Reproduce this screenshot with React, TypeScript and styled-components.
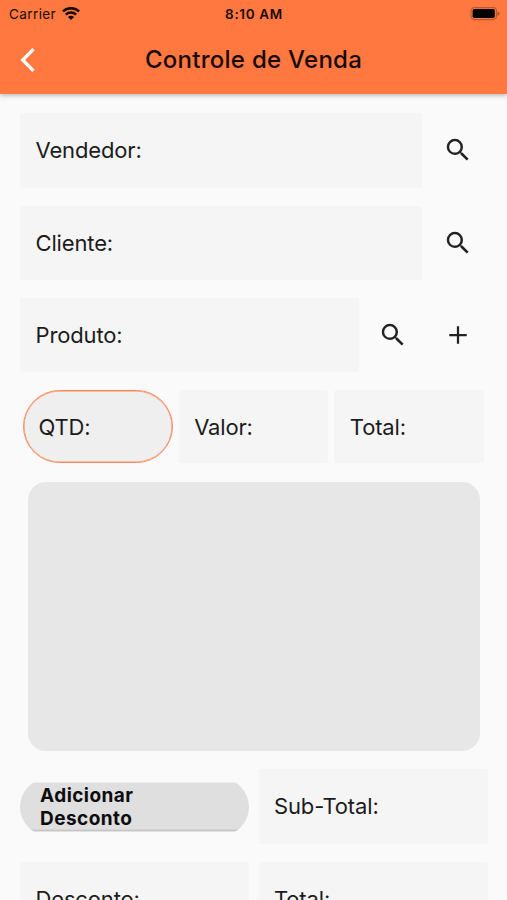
import React from "react";
import styled, { createGlobalStyle } from "styled-components";

const GlobalStyle = createGlobalStyle`
  * { box-sizing: border-box; }
  html, body { margin: 0; height: 100%; overflow: hidden; }
  body { background: #fafafa; font-family: Inter, "Liberation Sans", sans-serif; color: #1c1c1c; }
  button { border: 0; padding: 0; background: none; font: inherit; color: inherit; }
  svg { display: block; }
`;

const Screen = styled.div`
  width: 507px;
  height: 900px;
  overflow: hidden;
  background: #fafafa;
`;

const Header = styled.header`
  height: 94px;
  background: #ff7840;
  color: #170b06;
  box-shadow: 0 1px 5px rgba(0, 0, 0, 0.32);
`;

const StatusBar = styled.div`
  height: 27px;
  padding: 0 7px 0 9px;
  display: grid;
  grid-template-columns: 1fr auto 1fr;
  align-items: center;
  font-size: 13.5px;
  line-height: 27px;
`;

const Carrier = styled.div`
  display: flex;
  align-items: center;
  gap: 6px;
  letter-spacing: 0.4px;
`;

const Clock = styled.div`
  padding: 1px 1px 0 0;
  font-size: 13.5px;
  font-weight: 600;
  letter-spacing: 0.65px;
`;

const Battery = styled.div`
  justify-self: end;
`;

const TitleBar = styled.div`
  height: 65px;
  padding: 0 20px;
  display: grid;
  grid-template-columns: 40px 1fr 40px;
  align-items: center;
`;

const Title = styled.h1`
  margin: 0;
  text-align: center;
  font-size: 24px;
  line-height: 30px;
  font-weight: 500;
  letter-spacing: 0.27px;
`;

const Form = styled.main`
  padding: 19px 19px 0 20px;
  display: flex;
  flex-direction: column;
`;

const Row = styled.div<{ $columns: string; $gap?: number }>`
  display: grid;
  grid-template-columns: ${(p) => p.$columns};
  column-gap: ${(p) => p.$gap ?? 0}px;
  align-items: center;
  margin-bottom: 18px;
`;

const AmountRow = styled(Row)`
  padding: 0 4px 0 3px;
  margin-bottom: 19px;
`;

const Field = styled.div<{ $height?: number; $inset?: number }>`
  height: ${(p) => p.$height ?? 74}px;
  padding: 0 0 1px ${(p) => p.$inset ?? 15.5}px;
  display: flex;
  align-items: center;
  background: #f5f5f5;
  border-radius: 2px;
  font-size: 22px;
  line-height: 28px;
  letter-spacing: -0.15px;
  white-space: nowrap;
`;

const AmountField = styled(Field)`
  padding-bottom: 0;
`;

const FocusedField = styled(AmountField)`
  background: #efefef;
  border: 1px solid #f98a5c;
  box-shadow: inset 0 0 0 0.5px #f98a5c;
  border-radius: 37px;
`;

const IconButton = styled.button`
  height: 48px;
  display: grid;
  place-items: center;
  color: #222;
`;

const SearchButton = styled(IconButton)`
  padding-bottom: 1px;
`;

const BackButton = styled(IconButton)`
  justify-items: start;
`;

const ItemsPanel = styled.section`
  height: 269px;
  margin: 0 8px 18px;
  border-radius: 18px;
  background: #e7e7e7;
`;

const DiscountButton = styled.button`
  height: 58px;
  padding: 0 20px 0;
  border-radius: 29px;
  clip-path: inset(5px 0 4px 0);
  background: linear-gradient(#dfdfdf 51px, #bcbcbc 53px, #eeeeee 55px);
  color: #0d0d0d;
  font-size: 19px;
  line-height: 23px;
  font-weight: 700;
  letter-spacing: 0.45px;
  text-align: left;
`;

const DiscountLabel = styled.span`
  display: block;
  width: 120px;
`;

const SearchIcon = () => (
  <svg width="30" height="30" viewBox="0 0 24 24" fill="currentColor">
    <path d="M15.5 14h-.79l-.28-.27A6.471 6.471 0 0 0 16 9.5 6.5 6.5 0 1 0 9.5 16c1.61 0 3.09-.59 4.23-1.57l.27.28v.79l5 4.99L20.49 19l-4.99-5zm-6 0C7.01 14 5 11.99 5 9.5S7.01 5 9.5 5 14 7.01 14 9.5 11.99 14 9.5 14z" />
  </svg>
);

const PlusIcon = () => (
  <svg width="30" height="30" viewBox="0 0 24 24" fill="currentColor">
    <path d="M19 12.9h-6.1V19h-1.8v-6.1H5v-1.8h6.1V5h1.8v6.1H19z" />
  </svg>
);

const BackIcon = () => (
  <svg width="18" height="26" viewBox="0 0 18 26" fill="none" stroke="#fff" strokeWidth="3.3">
    <path d="M13.5 2.2 2.7 13l10.8 10.8" />
  </svg>
);

const WifiIcon = () => (
  <svg width="18" height="14" viewBox="0 0 18 14" fill="none" stroke="#140904" strokeWidth="2.5">
    <path d="M.9 4.4c4.6-4.3 11.6-4.3 16.2 0M3.8 7.6c3-2.8 7.4-2.8 10.4 0" />
    <path d="M9 13.1 5.9 10c1.7-1.7 4.5-1.7 6.2 0z" fill="#140904" stroke="none" />
  </svg>
);

const BatteryIcon = () => (
  <svg width="30" height="14" viewBox="0 0 30 14">
    <rect x="1" y="0.6" width="25.5" height="12" rx="3.5" fill="none" stroke="#b9582f" strokeWidth="1.1" />
    <rect x="2.6" y="2.1" width="22.2" height="8.9" rx="1.7" fill="#000" />
    <path d="M27.5 4.5q2.1.8 2.1 2.2t-2.1 2.2z" fill="#a9502b" />
  </svg>
);

export default function App() {
  return (
    <>
      <GlobalStyle />
      <Screen>
        <Header>
          <StatusBar>
            <Carrier>
              Carrier <WifiIcon />
            </Carrier>
            <Clock>8:10 AM</Clock>
            <Battery>
              <BatteryIcon />
            </Battery>
          </StatusBar>
          <TitleBar>
            <BackButton aria-label="Voltar">
              <BackIcon />
            </BackButton>
            <Title>Controle de Venda</Title>
          </TitleBar>
        </Header>
        <Form>
          <Row $columns="402px 67px" $gap={2}>
            <Field $height={75}>Vendedor:</Field>
            <SearchButton aria-label="Buscar vendedor"><SearchIcon /></SearchButton>
          </Row>
          <Row $columns="402px 67px" $gap={2}>
            <Field>Cliente:</Field>
            <SearchButton aria-label="Buscar cliente"><SearchIcon /></SearchButton>
          </Row>
          <Row $columns="339px 68px 62px">
            <Field>Produto:</Field>
            <SearchButton aria-label="Buscar produto"><SearchIcon /></SearchButton>
            <IconButton aria-label="Adicionar produto"><PlusIcon /></IconButton>
          </Row>
          <AmountRow $columns="repeat(3, 1fr)" $gap={6}>
            <FocusedField $height={73} $inset={14.5}>QTD:</FocusedField>
            <AmountField $height={73}>Valor:</AmountField>
            <AmountField $height={73}>Total:</AmountField>
          </AmountRow>
          <ItemsPanel />
          <Row $columns="229px 229px" $gap={10}>
            <DiscountButton>
              <DiscountLabel>Adicionar Desconto</DiscountLabel>
            </DiscountButton>
            <Field $height={75} $inset={15}>Sub-Total:</Field>
          </Row>
          <Row $columns="229px 229px" $gap={10}>
            <Field>Desconto:</Field>
            <Field $inset={15}>Total:</Field>
          </Row>
        </Form>
      </Screen>
    </>
  );
}
